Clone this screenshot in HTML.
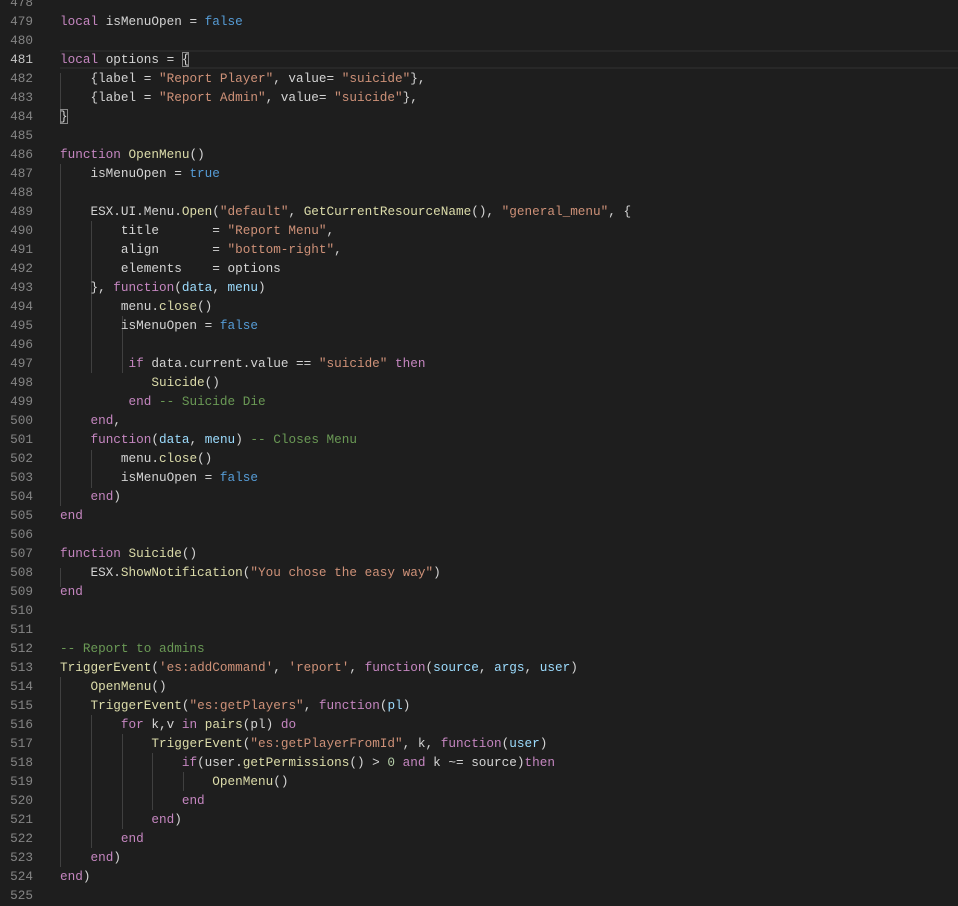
<!DOCTYPE html>
<html><head><meta charset="utf-8"><style>
html,body{margin:0;padding:0;background:#1e1e1e;width:958px;height:906px;overflow:hidden}
#w{position:relative;width:958px;height:906px}
.ln{position:absolute;left:0;top:-7px;width:33px;text-align:right;font:12.7px/19px "Liberation Mono",monospace;color:#858585;white-space:pre;margin:0}
.cd{position:absolute;left:60px;top:-7px;font:12.7px/19px "Liberation Mono",monospace;color:#d4d4d4;white-space:pre;margin:0}
.k{color:#c586c0}.b{color:#569cd6}.f{color:#dcdcaa}.s{color:#ce9178}.c{color:#6a9955}.v{color:#9cdcfe}.n{color:#b5cea8}
.g{position:absolute;width:1px;background:#404040}
.cur{position:absolute;left:60px;right:0;top:50px;height:15px;border-top:2px solid #282828;border-bottom:2px solid #282828}
.bm{outline:1px solid #888;outline-offset:-1px}
</style></head><body><div id="w">
<div class="cur"></div>
<div class="g" style="left:60px;top:73px;height:38px"></div>
<div class="g" style="left:60px;top:164px;height:342px"></div>
<div class="g" style="left:60px;top:568px;height:19px"></div>
<div class="g" style="left:60px;top:677px;height:190px"></div>
<div class="g" style="left:91px;top:221px;height:57px"></div>
<div class="g" style="left:91px;top:259px;height:114px"></div>
<div class="g" style="left:91px;top:450px;height:38px"></div>
<div class="g" style="left:91px;top:715px;height:133px"></div>
<div class="g" style="left:122px;top:316px;height:57px"></div>
<div class="g" style="left:122px;top:734px;height:95px"></div>
<div class="g" style="left:152px;top:753px;height:57px"></div>
<div class="g" style="left:183px;top:772px;height:19px"></div>
<pre class="ln">478
479
480
<span style="color:#c6c6c6">481</span>
482
483
484
485
486
487
488
489
490
491
492
493
494
495
496
497
498
499
500
501
502
503
504
505
506
507
508
509
510
511
512
513
514
515
516
517
518
519
520
521
522
523
524
525</pre>
<pre class="cd">

<span class="k">local</span> isMenuOpen = <span class="b">false</span>

<span class="k">local</span> options = <span class="bm">{</span>
    {label = <span class="s">"Report Player"</span>, value= <span class="s">"suicide"</span>},
    {label = <span class="s">"Report Admin"</span>, value= <span class="s">"suicide"</span>},
<span class="bm">}</span>

<span class="k">function</span> <span class="f">OpenMenu</span>()
    isMenuOpen = <span class="b">true</span>

    ESX.UI.Menu.<span class="f">Open</span>(<span class="s">"default"</span>, <span class="f">GetCurrentResourceName</span>(), <span class="s">"general_menu"</span>, {
        title       = <span class="s">"Report Menu"</span>,
        align       = <span class="s">"bottom-right"</span>,
        elements    = options
    }, <span class="k">function</span>(<span class="v">data</span>, <span class="v">menu</span>)
        menu.<span class="f">close</span>()
        isMenuOpen = <span class="b">false</span>

         <span class="k">if</span> data.current.value == <span class="s">"suicide"</span> <span class="k">then</span>
            <span class="f">Suicide</span>()
         <span class="k">end</span> <span class="c">-- Suicide Die</span>
    <span class="k">end</span>,
    <span class="k">function</span>(<span class="v">data</span>, <span class="v">menu</span>) <span class="c">-- Closes Menu</span>
        menu.<span class="f">close</span>()
        isMenuOpen = <span class="b">false</span>
    <span class="k">end</span>)
<span class="k">end</span>

<span class="k">function</span> <span class="f">Suicide</span>()
    ESX.<span class="f">ShowNotification</span>(<span class="s">"You chose the easy way"</span>)
<span class="k">end</span>


<span class="c">-- Report to admins</span>
<span class="f">TriggerEvent</span>(<span class="s">'es:addCommand'</span>, <span class="s">'report'</span>, <span class="k">function</span>(<span class="v">source</span>, <span class="v">args</span>, <span class="v">user</span>)
    <span class="f">OpenMenu</span>()
    <span class="f">TriggerEvent</span>(<span class="s">"es:getPlayers"</span>, <span class="k">function</span>(<span class="v">pl</span>)
        <span class="k">for</span> k,v <span class="k">in</span> <span class="f">pairs</span>(pl) <span class="k">do</span>
            <span class="f">TriggerEvent</span>(<span class="s">"es:getPlayerFromId"</span>, k, <span class="k">function</span>(<span class="v">user</span>)
                <span class="k">if</span>(user.<span class="f">getPermissions</span>() &gt; <span class="n">0</span> <span class="k">and</span> k ~= source)<span class="k">then</span>
                    <span class="f">OpenMenu</span>()
                <span class="k">end</span>
            <span class="k">end</span>)
        <span class="k">end</span>
    <span class="k">end</span>)
<span class="k">end</span>)
</pre>
</div></body></html>
